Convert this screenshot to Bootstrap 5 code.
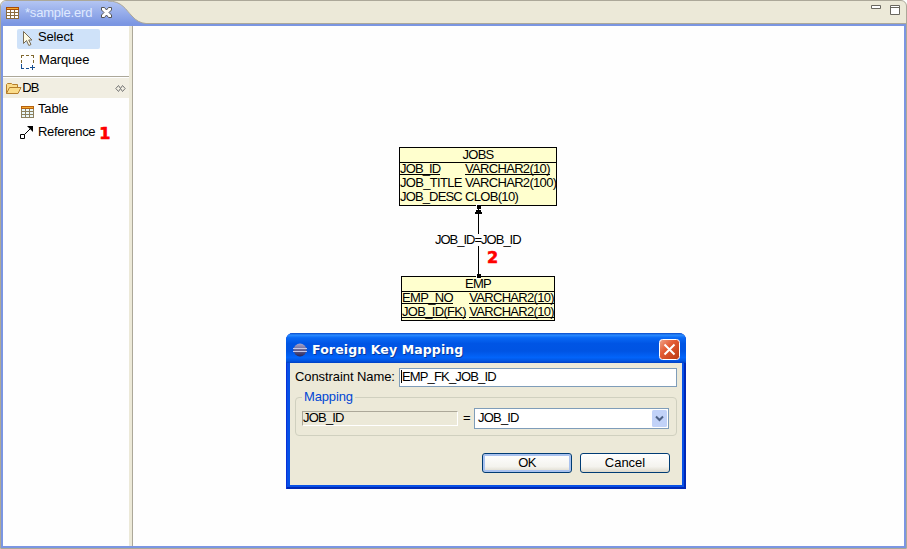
<!DOCTYPE html>
<html lang="en">
<head>
<meta charset="utf-8">
<meta name="viewport" content="width=device-width, initial-scale=1">
<title>sample.erd</title>
<link rel="stylesheet" href="https://cdn.jsdelivr.net/npm/bootstrap@5.3.0/dist/css/bootstrap.min.css">
<style>
body{font:13px/14px "Liberation Sans",Arial,sans-serif;color:#000;background:#fff;width:907px;height:549px}
svg{display:block;flex:none}
.workbench{width:907px;height:549px;border:1px solid #aca899;border-radius:6px 6px 0 0;background:#ece9d8}
.tabstrip{height:23px;border-bottom:1px solid #aca899}
.tab-wrap{width:145px;height:23px}
.tab-bg{left:0;top:0}
.tab-head{padding-left:5px}
.tab-title{color:#dfe9ff;letter-spacing:-.2px;width:76px;margin-left:6px}
.window-tools{gap:9px;padding:4px 6px 0 0}
.editor{border:2px solid #7b96e2;background:#fefefe}
.palette{width:126px}
.sash{width:4px;background:#ece9d8;border-right:1px solid #aca899}
.tool{height:20px}
.tool span{letter-spacing:-.15px}
.tool-select{margin:3px 0 0 14px;width:83px;background:#cfe2f9;border-radius:2px;padding:1px 0 0 5px}
.tool-marquee{margin:4px 0 0 18px}
.tool-marquee svg{margin-top:2px}
.drawer{margin-top:3px;border-top:1px solid #aca899;padding-top:1px}
.drawer-head{height:20px;background:#f1eee2;padding:0 3px}
.tool-table{margin:1px 0 0 18px}
.tool-table svg{margin-top:5px}
.tool-ref{margin:3px 0 0 17px}
.tool-ref .ref-label{letter-spacing:-.3px}
.callout-no{font:bold 16px/16px "DejaVu Sans",sans-serif;color:#f00;-webkit-text-stroke:.6px #f00}
.entity{background:#ffffce;border:1px solid #000;letter-spacing:-.68px;white-space:nowrap}
.entity-name{height:15px;line-height:13px;border-bottom:1px solid #000}
.entity-row{height:14px;line-height:12px}
.key span{border-bottom:1px solid #000;height:12px}
.tight{letter-spacing:-.85px}
.jobs{left:266px;top:121px;width:158px;height:59px}
.types{width:91px}
.emp{left:268px;top:250px;width:154px;height:45px}
.link-line{left:339px;top:178px}
.link-label{left:302px;top:208px;background:#fefefe;letter-spacing:-1px;line-height:12px;white-space:nowrap}
.no-two{left:354px;top:224px}
.fk-dialog{left:153px;top:307px;width:400px;height:156px;background:#0750e6;border-radius:7px 7px 0 0;padding:0 4px 4px;box-shadow:inset 1px 0 #0831d9,inset -2px -2px #0028b5}
.fk-title{height:30px;margin:0 -4px;padding:3px 6px 0 7px;border-radius:7px 7px 0 0;background:linear-gradient(#0848c8 0,#2a8bff 7%,#0868f4 16%,#0055e5 35%,#0054e3 60%,#0264fa 82%,#0254e0 93%,#0040c4);color:#fff;font:bold 12.5px/16px "DejaVu Sans",sans-serif}
.title-text{text-shadow:1px 1px #063a9c;margin-left:5px;white-space:nowrap;letter-spacing:.12px}
.fk-body{background:#ece9d8;height:122px;padding:5px 5px 0}
.name-label{width:104px;letter-spacing:-.08px;white-space:nowrap;padding-bottom:2px}
.xp-input{height:19px;border:1px solid #7f9db9;background:#fff;letter-spacing:-.85px;padding:0 0 2px 1px;width:278px}
.caret{width:1px;height:13px;background:#000}
.group{border:1px solid #d0d0bf;border-radius:4px;width:382px;margin-top:10px;height:39px;padding:10px 7px 0 6px}
.group-title{left:6px;top:-8px;background:#ece9d8;color:#0046d5;padding:0 2px;letter-spacing:-.15px}
.readonly{width:156px;height:15px;line-height:12px;margin-top:3px;border:1px solid;border-color:#aca899 #fff #fff #aca899;letter-spacing:-.8px}
.equals{width:16px;padding:3px 0 0 5px}
.combo{height:21px;width:195px;border:1px solid #7f9db9;background:#fff;letter-spacing:-.8px;padding:0 1px 0 3px}
.combo span{padding-bottom:2px}
.fk-actions{padding:17px 7px 0 0}
.xp-btn{width:90px;height:20px;border:1px solid #003c74;border-radius:3px;background:linear-gradient(#fff,#f4f3ee 70%,#dcd8cb);padding:0;font:inherit;line-height:16px;color:#000}
.xp-default{box-shadow:inset 0 0 0 2px #a9c2ef;letter-spacing:-.6px}
</style>
<script src="https://cdn.jsdelivr.net/npm/bootstrap@5.3.0/dist/js/bootstrap.bundle.min.js"></script>
</head>
<body class="overflow-hidden">
<div class="workbench d-flex flex-column overflow-hidden">
  <header class="tabstrip d-flex justify-content-between">
    <div class="tab-wrap position-relative d-flex align-items-center">
      <svg class="tab-bg position-absolute" width="145" height="23"><defs><linearGradient id="tg" x2="0" y2="1"><stop stop-color="#b3c5f3"/><stop offset="1" stop-color="#7b96e2"/></linearGradient></defs><path d="M0 23V5Q1 0 6 0H107C121 0 125 9 131 15Q137 22 145 22.5V23Z" fill="url(#tg)"/><path d="M107 0C121 0 125 9 131 15Q137 22 145 22.5" fill="none" stroke="#aca899"/></svg>
      <div class="tab-head position-relative d-flex align-items-center">
        <svg width="13" height="12" shape-rendering="crispEdges"><path d="M0 0H13V12H0Z" fill="#8c6c3e"/><path d="M0 0H13V3H0Z" fill="#a84a08"/><path d="M1 1H12V2H1Z" fill="#f5ab31"/><path d="M1 3h3v2H1zm4 0h3v2H5zm4 0h3v2H9zM1 6h3v2H1zm4 0h3v2H5zm4 0h3v2H9zM1 9h3v2H1zm4 0h3v2H5zm4 0h3v2H9z" fill="#fff"/></svg>
        <span class="tab-title">*sample.erd</span>
        <svg width="11" height="11" viewBox="0 0 11 11"><path d="M.5 .5H3.5L5.5 3 7.5 .5H10.5V3L8 5.5 10.5 8V10.5H7.5L5.5 8 3.5 10.5H.5V8L3 5.5 .5 3Z" fill="#fff" stroke="#555"/></svg>
      </div>
    </div>
    <div class="window-tools d-flex align-items-start">
      <svg width="10" height="4"><path d="M.5 .5h9v3h-9z" fill="#fff" stroke="#69675f"/></svg>
      <svg width="10" height="10"><path d="M.5 .5h9v9h-9zM0 2.5h10" fill="#fff" stroke="#69675f"/></svg>
    </div>
  </header>
  <main class="editor d-flex flex-grow-1">
    <aside class="palette">
      <div class="tool tool-select d-flex">
        <svg width="12" height="16"><path d="M1.500 1.500v12l3-3 2.300 5 2.200-1-2.300-4.500H10z" fill="#fffbe3" stroke="#786c55"/></svg>
        <span class="ms-1">Select</span>
      </div>
      <div class="tool tool-marquee d-flex">
        <svg width="14" height="15" fill="none" shape-rendering="crispEdges"><path d="M0 .5h3m2 0h3m2 0h3M.5 0v3m0 2v3m12-8v3m0 2v3" stroke="#80672e"/><path d="M.5 9v4M0 13.500h3m2 0h3M9 12.500h5m-2.500-2.500v5" stroke="#174f92"/></svg>
        <span class="ms-1">Marquee</span>
      </div>
      <section class="drawer">
        <div class="drawer-head d-flex align-items-center">
          <svg width="16" height="13"><path d="M.5 11.500V2.500l1-1h4l1 1h5v3M.5 11.500l3-6h11.500l-3 6z" fill="#fbdc8a" stroke="#b57e2b"/></svg>
          <span class="flex-grow-1 tight">&#8202;DB</span>
          <svg width="11" height="7" fill="none" stroke="#777"><path d="M3.500.5.8 3.500l2.700 3 2-3zM7.500.5l2.700 3-2.700 3-2-3z"/></svg>
        </div>
        <div class="tool tool-table d-flex align-items-center">
          <svg width="13" height="12" shape-rendering="crispEdges"><path d="M0 0H13V12H0Z" fill="#8c805e"/><path d="M0 0H13V3H0Z" fill="#b46010"/><path d="M1 1H12V2H1Z" fill="#f5ab31"/><path d="M1 3h3v2H1zm4 0h3v2H5zm4 0h3v2H9zM1 6h3v2H1zm4 0h3v2H5zm4 0h3v2H9zM1 9h3v2H1zm4 0h3v2H5zm4 0h3v2H9z" fill="#e9f7fb"/></svg>
          <span class="ms-1">Table</span>
        </div>
        <div class="tool tool-ref d-flex align-items-center">
          <svg width="14" height="14"><path d="M.5 9.500h4v4h-4zM4.500 9.500l6-6" fill="#fff" stroke="#000"/><path d="M7 1H13V7z"/></svg>
          <span class="ref-label ms-1">Reference</span>
          <span class="callout-no ms-1 mt-1">1</span>
        </div>
      </section>
    </aside>
    <div class="sash"></div>
    <section class="position-relative flex-grow-1">
      <div class="entity jobs position-absolute">
        <div class="entity-name text-center">JOBS</div>
        <div class="d-flex justify-content-between">
          <div><div class="entity-row key d-flex"><span class="tight">JOB_ID</span></div><div class="entity-row">JOB_TITLE</div><div class="entity-row tight">JOB_DESC</div></div>
          <div class="types"><div class="entity-row key d-flex"><span>VARCHAR2(10)</span></div><div class="entity-row">VARCHAR2(100)</div><div class="entity-row">CLOB(10)</div></div>
        </div>
      </div>
      <div class="entity emp position-absolute">
        <div class="entity-name text-center">EMP</div>
        <div class="d-flex justify-content-between">
          <div><div class="entity-row key d-flex"><span>EMP_NO</span></div><div class="entity-row key d-flex"><span>JOB_ID(FK)</span></div></div>
          <div><div class="entity-row key d-flex"><span>VARCHAR2(10)</span></div><div class="entity-row key d-flex"><span>VARCHAR2(10)</span></div></div>
        </div>
      </div>
      <svg class="link-line position-absolute" width="13" height="75" shape-rendering="crispEdges"><path d="M4 0h5v5H4zM4 71h5v4H4z" fill="#fefefe"/><path d="M5 1h4v4H5zM5 70h4v4H5zM4 6h5v2h1v2H3V8h1zM6 5h1v67H6z"/></svg>
      <div class="link-label position-absolute">JOB_ID=JOB_ID</div>
      <span class="callout-no no-two position-absolute">2</span>
      <div class="fk-dialog position-absolute" role="dialog">
        <div class="fk-title d-flex align-items-center">
          <svg width="14" height="14"><defs><linearGradient id="eg" x2="0" y2="1"><stop stop-color="#a8a4cc"/><stop offset="1" stop-color="#292459"/></linearGradient></defs><circle cx="7" cy="7" r="6.500" fill="url(#eg)"/><path d="M0 5.500h14M0 8.500h14" stroke="#c5c6e6"/></svg>
          <span class="title-text">Foreign Key Mapping</span>
          <svg class="ms-auto" width="21" height="21"><defs><linearGradient id="cg" x2="1" y2="1"><stop stop-color="#f0a58c"/><stop offset=".4" stop-color="#e35b34"/><stop offset="1" stop-color="#b93811"/></linearGradient></defs><rect x=".5" y=".5" width="20" height="20" rx="3" fill="url(#cg)" stroke="#fff"/><path d="M5.500 5.500l10 10m0-10l-10 10" stroke="#fff" stroke-width="2"/></svg>
        </div>
        <div class="fk-body">
          <div class="d-flex align-items-center"><span class="name-label">Constraint Name:</span><div class="xp-input d-flex align-items-center"><i class="caret"></i>EMP_FK_JOB_ID</div></div>
          <div class="group position-relative d-flex">
            <span class="group-title position-absolute">Mapping</span>
            <div class="readonly">JOB_ID</div>
            <span class="equals">=</span>
            <div class="combo d-flex align-items-center"><span>JOB_ID</span>
              <svg class="ms-auto" width="15" height="17"><rect width="15" height="17" rx="1.500" fill="#c1d2f8"/><path d="M4 6.500l3.500 3.500L11 6.500" fill="none" stroke="#4d6185" stroke-width="2"/></svg>
            </div>
          </div>
          <div class="fk-actions d-flex justify-content-end gap-2"><button class="xp-btn xp-default">OK</button><button class="xp-btn">Cancel</button></div>
        </div>
      </div>
    </section>
  </main>
</div>
</body>
</html>
